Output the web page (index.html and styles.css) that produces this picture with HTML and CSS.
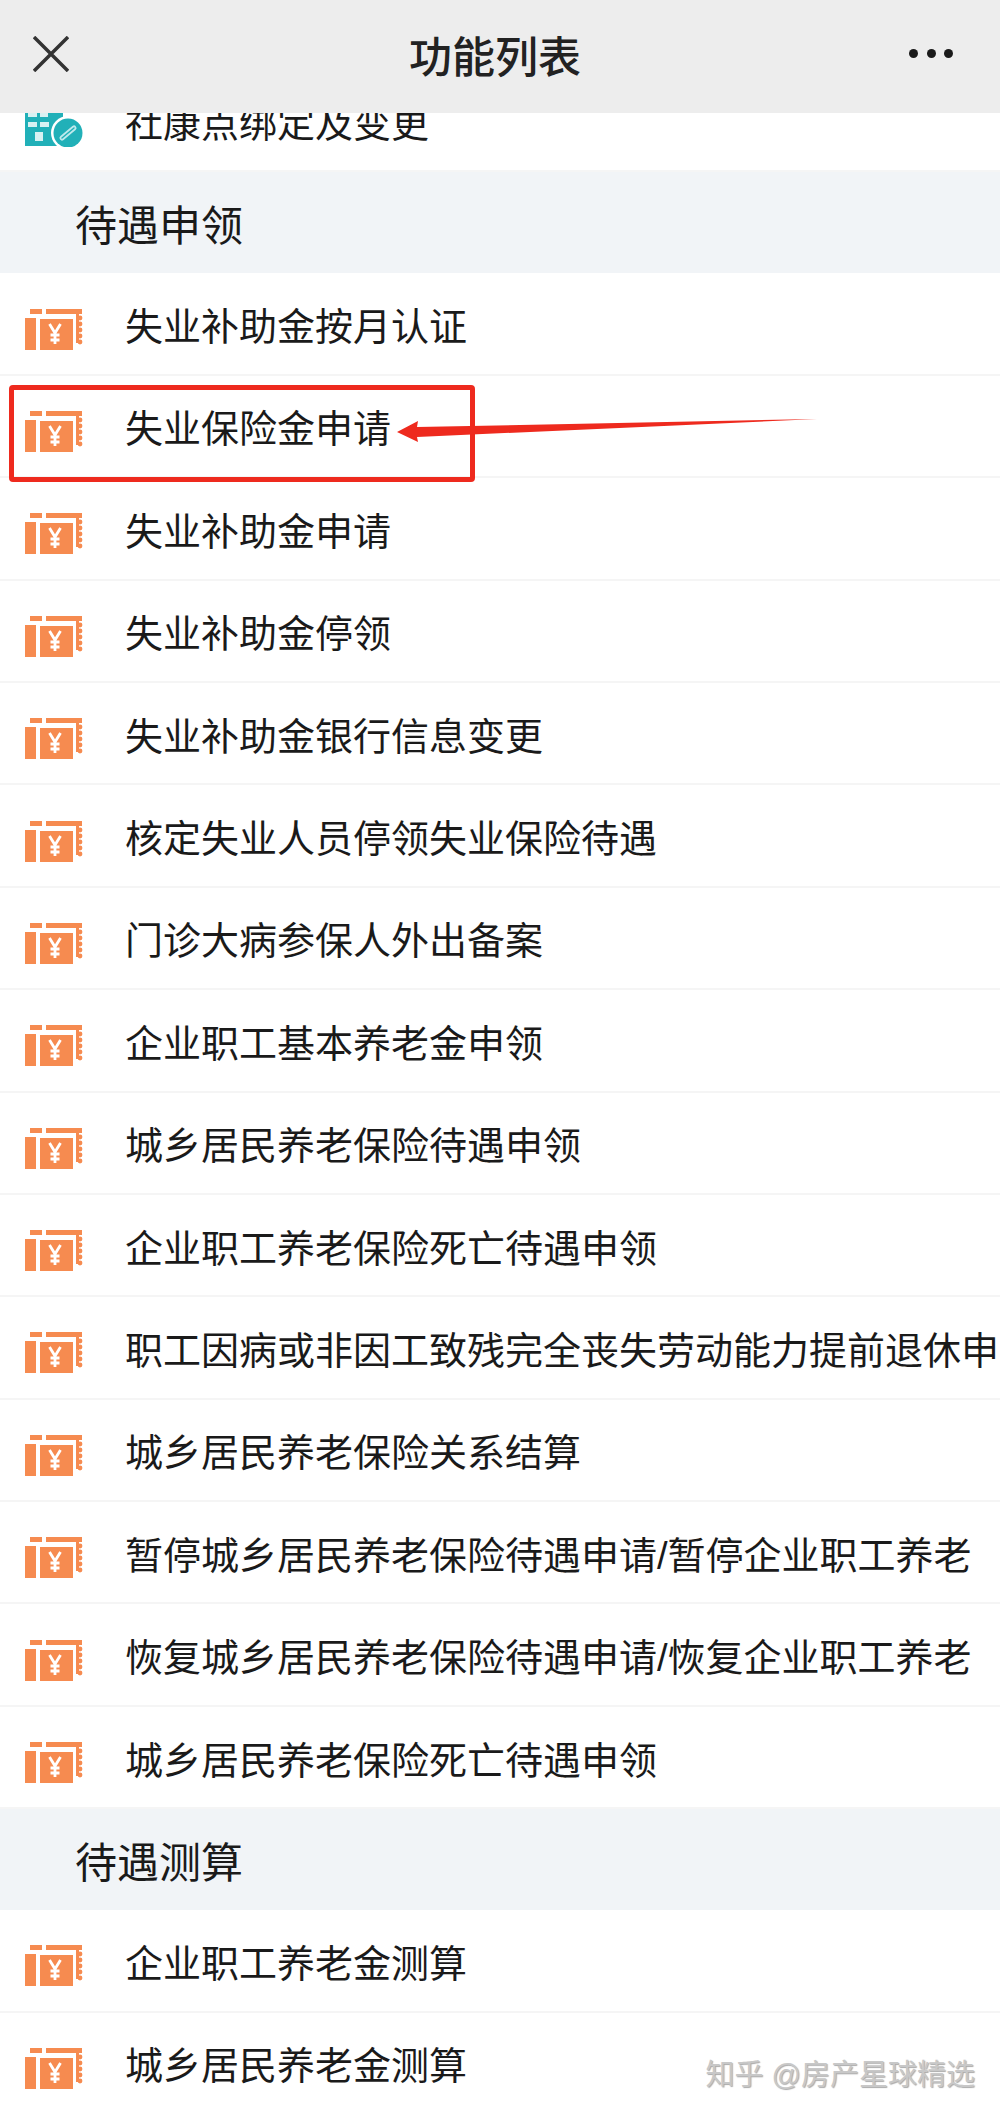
FILE: index.html
```html
<!DOCTYPE html>
<html lang="zh-CN">
<head>
    <meta charset="utf-8">
    <title>功能列表</title>
    <link rel="stylesheet" href="styles.css">
</head>
<body>
    <svg class="defs" width="0" height="0">
        <symbol id="ticket" viewBox="0 0 58 42">
            <rect x="5" y="0" width="12" height="5" fill="#f68b50"/>
            <rect x="21" y="0" width="36" height="5" fill="#f68b50"/>
            <rect x="51" y="5" width="3" height="29" fill="#f68b50"/>
            <circle cx="55" cy="9" r="2.4" fill="#f68b50"/>
            <circle cx="55" cy="15" r="2.4" fill="#f68b50"/>
            <circle cx="55" cy="21" r="2.4" fill="#f68b50"/>
            <circle cx="55" cy="27" r="2.4" fill="#f68b50"/>
            <circle cx="55" cy="33" r="2.4" fill="#f68b50"/>
            <rect x="0" y="9" width="11" height="32" fill="#f68b50"/>
            <rect x="15" y="10" width="33" height="31" fill="#f68b50"/>
            <path d="M24.500 15l5.500 9 5.500-9M30 24v11M25.500 26h9M25.500 31h9" fill="none" stroke="#fff" stroke-width="2.800"/>
        </symbol>
    </svg>

    <div class="top-bar">
        <svg class="close-icon" width="36" height="36" viewBox="0 0 36 36">
            <path d="M1 1L35 35M35 1L1 35" fill="none" stroke="#333" stroke-width="3.500"/>
        </svg>
        <div class="title">功能列表</div>
        <div class="dots"><span></span><span></span><span></span></div>
    </div>

    <div class="list">
        <div class="row">
            <svg class="icon" viewBox="0 0 58 42">
                <path d="M0 0H38V41H0Z" fill="#21b0b8"/>
                <rect x="3" y="8" width="9" height="4" fill="#d8f1f2"/>
                <rect x="15" y="8" width="8" height="4" fill="#d8f1f2"/>
                <rect x="3" y="17" width="9" height="5" fill="#d8f1f2"/>
                <rect x="15" y="17" width="9" height="5" fill="#d8f1f2"/>
                <rect x="10" y="27" width="8" height="9" fill="#d8f1f2"/>
                <circle cx="43" cy="28" r="17" fill="#fff"/>
                <circle cx="43" cy="28" r="14.500" fill="#21b0b8"/>
                <path d="M37 33l12-10" stroke="#bfe9ec" stroke-width="5" stroke-linecap="round"/>
                <path d="M37 33l12-10" stroke="#21b0b8" stroke-width="1.500" stroke-linecap="round"/>
            </svg>
            <span>社康点绑定及变更</span>
        </div>

        <div class="section">待遇申领</div>
        <div class="row"><svg class="icon"><use href="#ticket"/></svg><span>失业补助金按月认证</span></div>
        <div class="row"><svg class="icon"><use href="#ticket"/></svg><span>失业保险金申请</span></div>
        <div class="row"><svg class="icon"><use href="#ticket"/></svg><span>失业补助金申请</span></div>
        <div class="row"><svg class="icon"><use href="#ticket"/></svg><span>失业补助金停领</span></div>
        <div class="row"><svg class="icon"><use href="#ticket"/></svg><span>失业补助金银行信息变更</span></div>
        <div class="row"><svg class="icon"><use href="#ticket"/></svg><span>核定失业人员停领失业保险待遇</span></div>
        <div class="row"><svg class="icon"><use href="#ticket"/></svg><span>门诊大病参保人外出备案</span></div>
        <div class="row"><svg class="icon"><use href="#ticket"/></svg><span>企业职工基本养老金申领</span></div>
        <div class="row"><svg class="icon"><use href="#ticket"/></svg><span>城乡居民养老保险待遇申领</span></div>
        <div class="row"><svg class="icon"><use href="#ticket"/></svg><span>企业职工养老保险死亡待遇申领</span></div>
        <div class="row"><svg class="icon"><use href="#ticket"/></svg><span>职工因病或非因工致残完全丧失劳动能力提前退休申</span></div>
        <div class="row"><svg class="icon"><use href="#ticket"/></svg><span>城乡居民养老保险关系结算</span></div>
        <div class="row"><svg class="icon"><use href="#ticket"/></svg><span>暂停城乡居民养老保险待遇申请/暂停企业职工养老</span></div>
        <div class="row"><svg class="icon"><use href="#ticket"/></svg><span>恢复城乡居民养老保险待遇申请/恢复企业职工养老</span></div>
        <div class="row"><svg class="icon"><use href="#ticket"/></svg><span>城乡居民养老保险死亡待遇申领</span></div>

        <div class="section">待遇测算</div>
        <div class="row"><svg class="icon"><use href="#ticket"/></svg><span>企业职工养老金测算</span></div>
        <div class="row"><svg class="icon"><use href="#ticket"/></svg><span>城乡居民养老金测算</span></div>
    </div>

    <!-- red mark drawn over the screenshot -->
    <div class="red-box"></div>
    <svg class="red-arrow" width="420" height="30" viewBox="0 0 420 30">
        <path d="M0 17L21 6L20 12L420 4L20 22L21 27Z" fill="#ee2a1e"/>
    </svg>

    <div class="watermark">知乎 @房产星球精选</div>
</body>
</html>
```

FILE: styles.css
```css
html,
body {
    margin: 0;
    height: 2112px;
    overflow: hidden;
}

body {
    position: relative;
    background: #fff;
    font-family: "Liberation Sans", "Noto Sans CJK SC", sans-serif;
    color: #1a1a1a;
}

.defs {
    display: block;
    height: 0;
}

.top-bar {
    position: relative;
    z-index: 2;
    height: 113px;
    box-sizing: border-box;
    padding: 0 47px 6px 33px;
    display: flex;
    justify-content: space-between;
    align-items: center;
    background: #ededed;
}

.title {
    margin-left: 12px;
    font-size: 43px;
    font-weight: 500;
    color: #222;
}

.close-icon {
    display: block;
}

.dots {
    width: 44px;
    display: flex;
    justify-content: space-between;
}

.dots span {
    width: 9px;
    height: 9px;
    border-radius: 50%;
    background: #1a1a1a;
}

.list {
    margin-top: -43px;
}

.row {
    height: 102.4px;
    box-sizing: border-box;
    padding-left: 25px;
    display: flex;
    align-items: center;
    border-bottom: 2px solid #f5f5f5;
    font-size: 38px;
    white-space: nowrap;
    overflow: hidden;
}

.row .icon {
    flex: none;
    width: 58px;
    height: 42px;
    margin: 12px 42px 0 0;
    filter: blur(0.6px);
}

.section {
    height: 101px;
    box-sizing: border-box;
    padding-left: 75px;
    display: flex;
    align-items: center;
    background: #f1f4f7;
    font-size: 42px;
}

.red-box {
    position: absolute;
    left: 9px;
    top: 385px;
    width: 466px;
    height: 97px;
    box-sizing: border-box;
    border: 5px solid #ee2a1e;
    border-radius: 4px;
}

.red-arrow {
    position: absolute;
    left: 397px;
    top: 415px;
}

.watermark {
    position: absolute;
    right: 25px;
    top: 2051px;
    font-size: 29px;
    color: #c8c8c8;
    text-shadow: 1px 1px 1px #aaa;
}
```
